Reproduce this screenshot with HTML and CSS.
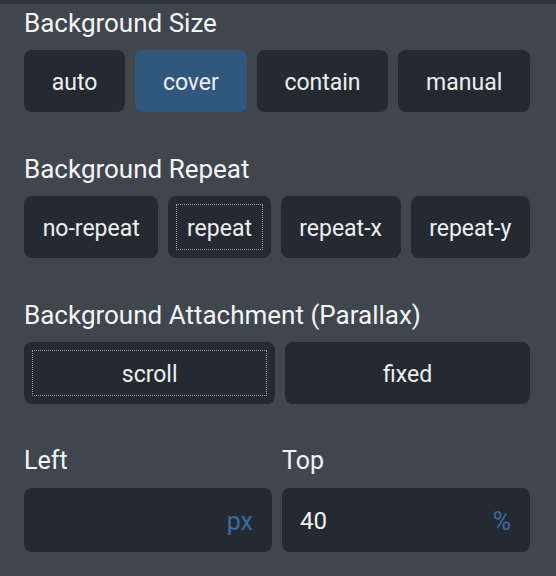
FILE: index.html
```html
<!DOCTYPE html>
<html>
<head>
<meta charset="utf-8">
<link rel="stylesheet" href="styles.css">
</head>
<body>
<div class="topbar"></div>
<div class="panel">
  <section class="group">
    <h2 class="heading">Background Size</h2>
    <div class="options">
      <button class="opt">auto</button>
      <button class="opt active">cover</button>
      <button class="opt">contain</button>
      <button class="opt">manual</button>
    </div>
  </section>
  <section class="group">
    <h2 class="heading">Background Repeat</h2>
    <div class="options">
      <button class="opt">no-repeat</button>
      <button class="opt focused">repeat</button>
      <button class="opt">repeat-x</button>
      <button class="opt">repeat-y</button>
    </div>
  </section>
  <section class="group">
    <h2 class="heading">Background Attachment (Parallax)</h2>
    <div class="options">
      <button class="opt focused">scroll</button>
      <button class="opt">fixed</button>
    </div>
  </section>
  <section class="group fields">
    <div class="field">
      <label class="label">Left</label>
      <div class="input"><span class="value"></span><span class="unit">px</span></div>
    </div>
    <div class="field">
      <label class="label">Top</label>
      <div class="input"><span class="value">40</span><span class="unit">%</span></div>
    </div>
  </section>
</div>
</body>
</html>
```

FILE: styles.css
```css
html, body {
  margin: 0;
  padding: 0;
}
body {
  background: #40464e;
  font-family: Roboto, "Liberation Sans", sans-serif;
  color: #f1f2f3;
  width: 556px;
  height: 576px;
  overflow: hidden;
}
.topbar {
  height: 4px;
  background: #2f333a;
}
.panel {
  padding: 2px 26px 0 24px;
}
.group + .group {
  margin-top: 40px;
}
.heading {
  margin: 0 0 10px;
  font-size: 26px;
  font-weight: 400;
  line-height: 34px;
  color: #f3f4f5;
}
.options {
  display: flex;
  gap: 10px;
}
.opt {
  flex: 1 1 auto;
  position: relative;
  height: 62px;
  padding: 3px 0 0;
  border: 0;
  border-radius: 8px;
  background: #252a32;
  color: #eceef0;
  font-family: Roboto, "Liberation Sans", sans-serif;
  font-size: 23px;
}
.opt.active {
  background: #31577c;
}
.opt.focused::after {
  content: "";
  position: absolute;
  inset: 8px;
  border: 1px dotted #9a9fa6;
}
.fields {
  display: flex;
  gap: 10px;
}
.field {
  flex: 1 1 0;
  display: flex;
  flex-direction: column;
}
.label {
  font-size: 25px;
  line-height: 34px;
  margin-bottom: 10px;
  color: #f3f4f5;
}
.input {
  height: 62px;
  border-radius: 8px;
  background: #252a32;
  display: flex;
  align-items: center;
  justify-content: space-between;
  padding: 2px 19px 0 18px;
}
.value {
  font-size: 24px;
  color: #f1f2f3;
}
.unit {
  font-size: 25px;
  color: #3d6a9f;
}
```
